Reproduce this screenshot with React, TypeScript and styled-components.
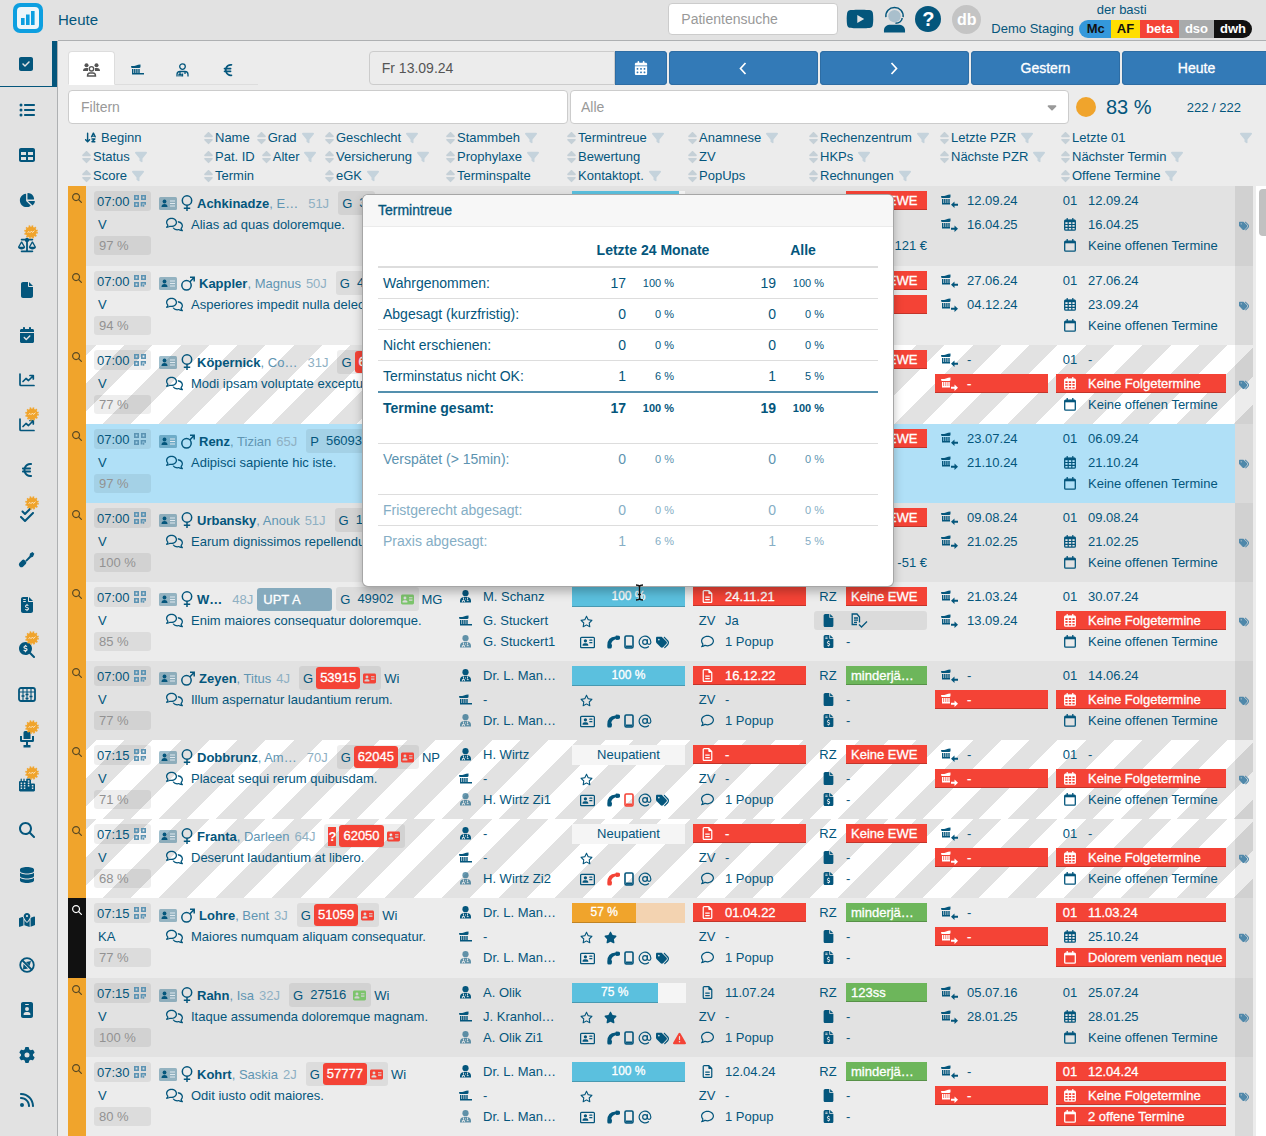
import React from "react";
import styled, { createGlobalStyle, css } from "styled-components";
import {
  FaSquareCheck, FaListUl, FaTable, FaChartPie, FaScaleBalanced, FaFile, FaCalendarCheck,
  FaEuroSign, FaCheckDouble, FaFileInvoiceDollar, FaMagnifyingGlassDollar, FaCity,
  FaMagnifyingGlass, FaDatabase, FaMapLocationDot, FaIdBadge, FaGear, FaRss,
  FaCalendarDays, FaSort, FaFilter, FaArrowDownAZ,
  FaRegStar, FaStar, FaRegAddressCard, FaAddressCard, FaTags, FaTriangleExclamation,
  FaRegFileLines, FaRegComment, FaRegComments, FaYoutube, FaCaretDown,
} from "react-icons/fa6";
import { AtSign } from "lucide-react";

const c = {
  ink: "#04567c",
  muted: "#5f95b2",
  faint: "#8fb0c3",
  page: "#ececec",
  shade: "#e2e2e2",
  line: "#aeb0b2",
  red: "#f44336",
  green: "#6db65b",
  orange: "#f0a42c",
  sky: "#5bc0de",
  primary: "#337ab7",
};

const Global = createGlobalStyle`
  *, *::before, *::after { box-sizing: border-box; }
  body { margin: 0; font: 13px/19px "Liberation Sans", Arial, sans-serif; color: ${c.ink}; background: ${c.page}; }
  button, input, select { font: inherit; color: inherit; margin: 0; }
  button { border: 0; padding: 0; background: none; cursor: pointer; }
  svg { display: block; flex: none; }
`;

/* ---------- frame ---------- */

const Frame = styled.div`
  display: grid;
  grid-template: 41px minmax(0, 1fr) / 58px minmax(0, 1fr);
  height: 100vh;
  overflow: hidden;
`;
const LogoCell = styled.div`
  display: flex;
  justify-content: center;
  align-items: flex-start;
  padding: 3px 2px 0 0;
  background: ${c.shade};
`;
const TopBar = styled.header`
  display: flex;
  align-items: center;
  background: ${c.shade};
  border-bottom: 1px solid ${c.line};
  padding: 0 14px 2px 0;
`;
const PageTitle = styled.h1`
  flex: 1;
  margin: 0;
  font-size: 15px;
  font-weight: 400;
`;
const TextField = styled.input`
  height: 34px;
  padding: 0 12px;
  border: 1px solid #ccc;
  border-radius: 4px;
  background: ${(p) => (p.readOnly ? "#ececec" : "#fff")};
  font-size: 14px;
  color: #555;
  outline: 0;
  &::placeholder { color: #999; opacity: 1; }
`;
const PatientSearch = styled(TextField)`
  width: 170px;
  height: 32px;
`;
const TopIcons = styled.div`
  display: flex;
  align-items: center;
  gap: 9px;
  margin: 0 10px 0 8px;
`;
const HelpButton = styled.button`
  width: 26px;
  height: 26px;
  border-radius: 50%;
  background: ${c.ink};
  color: #fff;
  font-size: 20px;
  font-weight: 700;
`;
const Avatar = styled.span`
  width: 29px;
  height: 29px;
  margin-left: 2px;
  border-radius: 50%;
  background: #c4c4c4;
  color: #fff;
  font-size: 16px;
  font-weight: 700;
  line-height: 29px;
  text-align: center;
`;
const Account = styled.div`
  display: flex;
  flex-direction: column;
  align-items: center;
`;
const AccountRow = styled.div`
  display: flex;
  align-items: center;
  gap: 5px;
`;
const Pills = styled.div`
  display: flex;
  border-radius: 9px;
  overflow: hidden;
`;
const Pill = styled.span<{ $bg: string; $fg: string }>`
  padding: 0 6px;
  line-height: 18px;
  font-weight: 700;
  background: ${(p) => p.$bg};
  color: ${(p) => p.$fg};
  &:first-child { padding-left: 8px; }
`;

/* ---------- sidebar ---------- */

const Sidebar = styled.nav`
  border-right: 1px solid ${c.line};
  background: ${c.shade};
  overflow: hidden;
`;
const NavItem = styled.a<{ $active?: boolean }>`
  display: grid;
  place-items: center;
  height: 45px;
  padding-right: 4px;
  color: ${c.ink};
  font-size: 16px;
  ${(p) => p.$active && css`
    height: 46px;
    padding-right: 0;
    border-right: 5px solid ${c.ink};
    border-bottom: 1px solid ${c.ink};
  `}
`;
const NavIcon = styled.span`
  position: relative;
`;
const Badge = styled.span`
  position: absolute;
  top: -11px;
  left: 6px;
`;

/* ---------- toolbar ---------- */

const Main = styled.main`
  display: flex;
  flex-direction: column;
  min-width: 0;
  min-height: 0;
  padding-left: 10px;
  overflow: hidden;
`;
const Toolbar = styled.div`
  display: flex;
  justify-content: space-between;
  padding-top: 10px;
  margin-right: -5px;
`;
const Tabs = styled.div`
  display: flex;
  width: 190px;
  height: 34px;
  border-bottom: 1px solid #ddd;
`;
const Tab = styled.button<{ $active?: boolean }>`
  display: grid;
  place-items: center;
  width: 45px;
  height: 34px;
  padding-top: 3px;
  font-size: 14px;
  ${(p) => p.$active && css`
    width: 47px;
    border: 1px solid #ddd;
    border-bottom-color: #fff;
    border-radius: 4px 4px 0 0;
    background: #fff;
    color: #555;
  `}
`;
const DateNav = styled.div`
  display: flex;
  gap: 2px;
  width: 75%;
`;
const DateGroup = styled.div`
  display: flex;
  flex: 2 1 0;
  min-width: 0;
`;
const DateField = styled(TextField)`
  flex: 1;
  min-width: 0;
  border-radius: 4px 0 0 4px;
`;
const Primary = styled.button<{ $addon?: boolean }>`
  display: grid;
  place-items: center;
  flex: ${(p) => (p.$addon ? "0 0 52px" : "1 1 0")};
  height: 34px;
  border-radius: ${(p) => (p.$addon ? "0 4px 4px 0" : "4px")};
  background: ${c.primary};
  box-shadow: inset 0 0 0 1px #2e6da4;
  color: #fff;
  font-size: 14px;
  -webkit-text-stroke: 0.3px currentColor;
`;
const FilterBar = styled.div`
  display: grid;
  grid-template-columns: minmax(0, 500fr) minmax(0, 499fr) 182px;
  gap: 2px;
  padding: 5px 13px 4px 0;
`;
const SelectBox = styled.div`
  display: grid;
  > * { grid-area: 1 / 1; }
  > svg { place-self: center end; margin-right: 10px; color: #999; pointer-events: none; }
`;
const Select = styled.select`
  appearance: none;
  height: 34px;
  padding: 0 10px;
  border: 1px solid #ccc;
  border-radius: 4px;
  background: #fff;
  font-size: 14px;
  color: #999;
`;
const Summary = styled.div`
  display: flex;
  align-items: center;
  padding: 0 12px 0 5px;
`;
const Dot = styled.span`
  width: 20px;
  height: 20px;
  margin-right: 10px;
  border-radius: 50%;
  background: ${c.orange};
`;
const Percent = styled.span`
  flex: 1;
  font-size: 20px;
`;

/* ---------- list ---------- */

const ListArea = styled.div`
  position: relative;
  display: flex;
  gap: 3px;
  flex: 1;
  min-height: 0;
`;
const Track = styled.div`
  width: 10px;
  margin-top: 58px;
  padding: 3px 0 0 3px;
  background: #fff;
`;
const Thumb = styled.div`
  height: 47px;
  border-radius: 4px 0 0 4px;
  background: #c1c1c1;
`;
const List = styled.table`
  display: block;
  flex: 1;
  min-width: 0;
  thead, tbody { display: block; }
  th, td { padding: 0; }
`;
const HeadRow = styled.tr`
  display: grid;
  grid-template-columns: 122fr 121fr 121fr 121fr 121fr 121fr 131fr 121fr 192fr;
  height: 58px;
  padding-left: 14px;
`;
const HeadCell = styled.th`
  font-weight: 400;
  text-align: left;
  white-space: nowrap;
`;
const HeadLine = styled.div`
  display: flex;
  align-items: center;
  gap: 5px;
  height: 19px;
  > svg { color: #c5d3dc; font-size: 12px; }
`;
const EndFilter = styled.span`
  margin-left: auto;
  padding-right: 1px;
  color: #c5d3dc;
  font-size: 12px;
`;
const SortButton = styled.button`
  display: flex;
  align-items: center;
  gap: 2px;
  > svg { width: 9px; height: 14px; color: #c5d0d7; }
  & + & { margin-left: 2px; }
`;
const ActiveSort = styled.span`
  display: flex;
  padding: 0 2px;
  font-size: 13px;
`;

type Tone = "shade" | "plain" | "stripe" | "select";
const toneBg: Record<Tone, string> = {
  shade: c.shade,
  plain: c.page,
  stripe: "repeating-linear-gradient(135deg, #e2e2e2 0 20px, #fff 20px 40px)",
  select: "#b0e0f7",
};
const Row = styled.tr<{ $tone: Tone; $tall?: boolean }>`
  display: grid;
  grid-template-columns: 18px 361fr 121fr 121fr 121fr 121fr 121fr 183fr 18px;
  height: ${(p) => (p.$tall ? 80 : 79)}px;
  background: ${(p) => toneBg[p.$tone]};
  white-space: nowrap;
`;
const Strip = styled.td<{ $dark?: boolean }>`
  background: ${(p) => (p.$dark ? "#111" : c.orange)};
  color: ${(p) => (p.$dark ? "#fff" : "#5a4a24")};
  > button { display: grid; place-items: center; width: 18px; height: 24px; font-size: 10px; }
`;
const lines = css`
  display: grid;
  grid-template-rows: 24px 21px 21px;
  align-items: start;
  align-content: start;
`;
const PatientCell = styled.td`
  display: grid;
  grid-template-columns: 57px minmax(0, 1fr);
  column-gap: 8px;
  padding: 5px 0 0 8px !important;
`;
const Stack = styled.div`${lines}`;
const Cell = styled.td<{ $end?: number }>`
  ${lines}
  padding: 5px ${(p) => p.$end ?? 4}px 0 4px !important;
  min-width: 0;
`;
const TimeBox = styled.div`
  display: flex;
  align-items: center;
  justify-content: space-between;
  height: 20px;
  padding: 0 5px 0 3px;
  border-radius: 3px;
  background: rgba(0, 0, 0, 0.065);
`;
const StatusText = styled.div`
  padding-left: 4px;
`;
const Score = styled(TimeBox)`
  height: 19px;
  padding-left: 5px;
  color: #929292;
`;
const NameLine = styled.div`
  display: flex;
  align-items: center;
  height: 24px;
`;
const CardChip = styled.span`
  display: grid;
  margin-right: 4px;
`;
const Given = styled.span`
  color: ${c.muted};
`;
const Name = styled.span<{ $cut?: boolean }>`
  margin: 0 ${(p) => (p.$cut ? 10 : 5)}px 0 4px;
`;
const Age = styled.span`
  margin-right: 9px;
  color: ${c.faint};
`;
const Treatment = styled.span`
  width: 75px;
  margin: 0 4px 0 -5px;
  padding-left: 6px;
  border-radius: 3px;
  background: #85aabd;
  color: #fff;
  line-height: 23px;
  -webkit-text-stroke: 0.3px #fff;
`;
const IdBox = styled.span`
  display: flex;
  align-items: center;
  gap: 3px;
  height: 24px;
  padding: 0 5px 0 4px;
  margin-right: 3px;
  border-radius: 3px;
  background: rgba(0, 0, 0, 0.065);
`;
const PatientId = styled.span<{ $red?: boolean }>`
  padding: 0 4px;
  border-radius: 3px;
  line-height: 22px;
  ${(p) => p.$red && css`
    background: ${c.red};
    color: #fff;
    -webkit-text-stroke: 0.3px #fff;
  `}
`;
const Unknown = styled.span`
  background: ${c.red};
  color: #fff;
  font-weight: 700;
`;
const EgkIcon = styled.span<{ $ok?: boolean }>`
  color: ${(p) => (p.$ok ? "#7cc46c" : c.red)};
  font-size: 13px;
`;
const Comment = styled.div`
  display: flex;
  align-items: center;
  gap: 8px;
  padding-left: 7px;
  > svg { font-size: 17px; }
`;

type Fill = "red" | "green" | "gray";
const fills: Record<Fill, string> = { red: c.red, green: c.green, gray: "rgba(0,0,0,.07)" };
const fillStyle = css<{ $fill?: Fill }>`
  ${(p) => p.$fill && css`
    background: ${fills[p.$fill]};
    ${p.$fill !== "gray" && css`
      color: #fff;
      -webkit-text-stroke: 0.3px #fff;
      box-shadow: inset 0 -1px 0 rgba(0, 0, 0, 0.2);
    `}
  `}
`;
const Line = styled.div<{ $fill?: Fill }>`
  display: grid;
  grid-template-columns: 28px minmax(0, 1fr);
  column-gap: 4px;
  height: 19px;
  border-radius: ${(p) => (p.$fill === "gray" ? 3 : 0)}px;
  ${fillStyle}
`;
const Slot = styled.span<{ $light?: boolean }>`
  display: grid;
  place-items: center;
  opacity: ${(p) => (p.$light ? 0.6 : 1)};
  font-size: 13px;
`;
const SlotText = styled.span`
  text-align: center;
`;
const Value = styled.span<{ $fill?: Fill; $right?: boolean; $inset?: boolean }>`
  display: block;
  padding-left: ${(p) => (p.$fill || p.$inset ? 5 : 0)}px;
  padding-top: ${(p) => (p.$inset ? 2 : 0)}px;
  text-align: ${(p) => (p.$right ? "right" : "left")};
  ${fillStyle}
`;
const Bar = styled.div<{ $rest: string }>`
  height: 20px;
  background: ${(p) => p.$rest};
  text-align: center;
`;
const BarFill = styled.div<{ $color: string }>`
  height: 20px;
  background: ${(p) => p.$color};
  box-shadow: inset 0 -1px 0 rgba(0, 0, 0, 0.2);
  color: #fff;
  font-size: 12px;
  -webkit-text-stroke: 0.3px #fff;
`;
const Icons = styled.div<{ $gap: number }>`
  display: flex;
  align-items: center;
  gap: ${(p) => p.$gap}px;
  height: 20px;
  padding-left: 8px;
  font-size: 13px;
`;
const Contact = styled.span<{ $bad?: boolean; $lead?: boolean }>`
  margin-right: ${(p) => (p.$lead ? 8 : 0)}px;
  font-size: ${(p) => (p.$lead ? 15 : 13)}px;
  color: ${(p) => (p.$bad ? c.red : "inherit")};
`;
const TagCell = styled.td<{ $solid?: boolean }>`
  display: grid;
  place-items: center;
  background: ${(p) => (p.$solid ? "#dadada" : "rgba(0,0,0,.075)")};
  color: #4f88aa;
  font-size: 10px;
`;

/* ---------- popover ---------- */

const Popover = styled.section`
  position: absolute;
  top: 66px;
  left: 294px;
  width: 532px;
  height: 393px;
  border: 1px solid rgba(0, 0, 0, 0.35);
  border-radius: 6px;
  background: #fff;
  box-shadow: 0 5px 10px rgba(0, 0, 0, 0.25);
  overflow: hidden;
  font-size: 14px;
`;
const PopTitle = styled.h2`
  margin: 0 0 8px;
  padding: 0 15px;
  border-bottom: 1px solid #ebebeb;
  background: #f7f7f7;
  font-size: 14px;
  font-weight: 400;
  line-height: 31px;
  -webkit-text-stroke: 0.3px currentColor;
`;
const Stats = styled.table`
  width: 500px;
  margin: 0 15px;
  border-collapse: collapse;
  table-layout: fixed;
  th { height: 32px; padding: 0; }
  thead tr { border-bottom: 2px solid #ddd; }
`;
const StatRow = styled.tr<{ $strong?: boolean; $level: number; $deep?: boolean }>`
  height: ${(p) => (p.$deep ? 51 : 31)}px;
  border-top: ${(p) => (p.$strong ? `2px solid #5490ae` : "1px solid #ddd")};
  color: ${(p) => [c.ink, "#5c93b0", "#85aec5"][p.$level]};
  font-weight: ${(p) => (p.$strong ? 700 : 400)};
  td, th {
    height: auto;
    padding: 6px 5px 5px;
    vertical-align: top;
    font-weight: inherit;
    text-align: right;
  }
  th { text-align: left; }
  td:nth-of-type(even) { padding-right: 54px; font-size: 11px; }
`;
const Cursor = styled.span`
  position: absolute;
  top: 456px;
  left: 567px;
`;

/* ---------- drawn icons ---------- */

const Logo = () => (
  <svg width="30" height="30" viewBox="0 0 30 30">
    <rect width="30" height="30" rx="7" fill="#0d9fe0" />
    <rect x="4" y="4" width="22" height="22" rx="4" fill="#eef6fa" />
    <rect x="8" y="15" width="3.6" height="7" fill="#0d9fe0" />
    <rect x="13" y="11.5" width="3.6" height="10.5" fill="#0d9fe0" />
    <rect x="18" y="8" width="3.6" height="14" fill="#0d9fe0" />
  </svg>
);
const Agent = () => (
  <svg width="23" height="27" viewBox="0 0 24 27">
    <path d="M1 27v-2c0-4 3-6 7-6h8c4 0 7 2 7 6v2z" fill={c.ink} />
    <circle cx="12" cy="10" r="6.500" fill="#a9bfcc" />
    <path d="M3 11C2.500 5 6.500 1 12 1s9.500 4 9 10M20 12c0 3-3 5.500-7 5.500" fill="none" stroke={c.ink} strokeWidth="1.500" />
  </svg>
);
const BadgeIcon = () => (
  <svg width="14" height="14" viewBox="0 0 14 14">
    <circle cx="7" cy="7" r="5.600" fill={c.orange} />
    <circle cx="7" cy="7" r="6" fill="none" stroke={c.orange} strokeWidth="1.600" strokeDasharray="1.570 1.570" />
    <path d="M3.500 7.500l1.500-1 1 1.200L7.500 6l1 1.500 2-1.800" fill="none" stroke="#fbe3bd" strokeWidth="1" />
  </svg>
);
const ChartIcon = () => (
  <svg width="16" height="14" viewBox="0 0 16 14" fill="none" stroke="currentColor" strokeWidth="1.700" strokeLinecap="round" strokeLinejoin="round">
    <path d="M1 1v10.500q0 1 1 1h13M4 8.500l3-3 2.500 2L14 3M11 2.500h3.300V6" />
  </svg>
);
const ToolIcon = () => (
  <svg width="17" height="17" viewBox="0 0 17 17" fill="currentColor">
    <path d="M1.300 12l3-3q1.200-1 2.700.500l.500.500q1.500 1.500.500 2.700l-3 3q-1.800 1.300-3.300-.3-1.600-1.600-.4-3.400z" />
    <path d="M14.500 1l1.800 1.800-1.300 3-2 .7-4.500 4.200-1.200-1.200L11.500 5l.5-2.500z" />
  </svg>
);
const AbacusIcon = () => (
  <svg width="18" height="15" viewBox="0 0 18 15" fill="none" stroke="currentColor">
    <rect x="1" y="1" width="16" height="13" rx="2" strokeWidth="1.800" />
    <path d="M5 1v13M9 1v13M13 1v13M1 5h16" strokeWidth="1.100" />
    <path d="M3.500 9h3M7.500 7.500h3M11.500 9.500h3M7.500 11.500h3" strokeWidth="1.500" />
  </svg>
);
const ChairIcon = () => (
  <svg width="16" height="17" viewBox="0 0 16 17" fill="currentColor">
    <path d="M4.500 1.500Q4.500 0 6 0h4q1.500 0 1.500 1.500V8h-7zM1 5h2v4h10V5h2v4.500Q15 11 13.500 11H9v3h2.500v2.500h-7V14H7v-3H2.500Q1 11 1 9.500z" />
  </svg>
);
const CompassOff = () => (
  <svg width="16" height="16" viewBox="0 0 16 16" fill="none" stroke="currentColor" strokeWidth="1.800">
    <circle cx="8" cy="8" r="6.800" />
    <path d="M3 3l10 10" />
    <path d="M7 5l5-1-1.500 5zM4.500 7l4.500 4.500-5 1z" fill="currentColor" stroke="none" />
  </svg>
);
const GroupIcon = () => (
  <svg width="17" height="14" viewBox="0 0 17 14" fill="currentColor">
    <circle cx="3.500" cy="2.200" r="2" /><circle cx="13.500" cy="2.200" r="2" />
    <path d="M0 8q0-3 3-3h2v3zM17 8q0-3-3-3h-2v3z" />
    <circle cx="8.500" cy="5.800" r="2.200" fill="none" stroke="currentColor" strokeWidth="1.400" />
    <path d="M4.500 13q0-3 2.500-3h3q2.500 0 2.500 3z" fill="none" stroke="currentColor" strokeWidth="1.400" />
  </svg>
);
const DoctorOutline = () => (
  <svg width="13" height="14" viewBox="0 0 13 14" fill="none" stroke="currentColor" strokeWidth="1.300">
    <circle cx="6.500" cy="3.600" r="2.800" />
    <path d="M1 13.500v-2q0-3 3-3h5q3 0 3 3v2M4 9v2.500M9 9v2M3 13.500v-2h2v2M6.500 10.500v3" />
  </svg>
);
const DoctorSolid = () => (
  <svg width="11" height="13" viewBox="0 0 11 13">
    <circle cx="5.500" cy="3.200" r="3.100" fill="currentColor" />
    <path d="M0 12.500V11q0-3.500 3.500-4h4Q11 7.500 11 11v1.500z" fill="currentColor" />
    <path d="M3.500 7.500v2.200M2.400 12.200v-1.700h2v1.700M7.500 7.500v2M6.800 10.600h1.800M5.500 8.500v1" stroke={c.page} strokeWidth=".900" fill="none" />
  </svg>
);
const Brush = ({ arrow }: { arrow?: "in" | "out" }) => (
  <svg width={arrow ? 17 : 13} height={arrow ? 14 : 11} viewBox={arrow ? "0 0 17 14" : "0 0 13 11"} fill="currentColor">
    <path d="M0 2Q3 2.200 5 1.400t4.500-1v2.800L8.500 4H0.500zM1 5H2.400V9H1zM3.100 5h1.400V9H3.100zM5.200 5H6.600V9H5.200zM7.300 5h1.400V9H7.300zM1 9h8v1.500H1z" />
    {!arrow && <path d="M9 9h4v1.500H9z" />}
    {arrow === "in" && <path d="M10 10.800L13.500 7.500v2.300h3.500v2h-3.500V14z" />}
    {arrow === "out" && <path d="M17 10.800L13.500 7.500v2.300H10v2h3.500V14z" />}
  </svg>
);
const Venus = () => (
  <svg width="12" height="16" viewBox="0 0 12 16" fill="none" stroke="currentColor" strokeWidth="1.500">
    <circle cx="6" cy="5.500" r="4.700" /><path d="M6 10.200V16M2.800 13.200h6.400" />
  </svg>
);
const Mars = () => (
  <svg width="14" height="15" viewBox="0 0 14 15" fill="none" stroke="currentColor" strokeWidth="1.500">
    <circle cx="5.500" cy="9.300" r="4.700" /><path d="M8.800 6L13 1.500M9 1.300h4.200V5.500" />
  </svg>
);
const Qr = () => (
  <svg width="12" height="12" viewBox="0 0 12 12" fill="none" stroke="#5b93b3" strokeWidth="1.600">
    <path d="M.8.800h3.400v3.400H.8zM7.800.800h3.400v3.400H7.800zM.8 7.800h3.400v3.400H.8zM7.500 11.500V7.800h3.800v2M9.500 9.500v2.300" />
  </svg>
);
const ProfileCard = () => (
  <svg width="18" height="13" viewBox="0 0 18 13">
    <rect width="18" height="13" rx="1.500" fill={c.ink} opacity=".38" />
    <circle cx="5.500" cy="4.500" r="1.900" fill={c.ink} /><path d="M2.500 10q0-3 3-3t3 3z" fill={c.ink} />
    <path d="M11 4h5M11 6.500h5M11 9h5" stroke="#dfe8ee" strokeWidth="1" />
  </svg>
);
const Handset = () => (
  <svg width="13" height="14" viewBox="0 0 13 14" fill="currentColor">
    <path d="M8.500 1.500Q8.500.5 9.500.5L12 .8q1 .2 1 1.200v1.500q0 1-1 1.200l-2.200.3q-1 0-1.100-.8-3.700 1-4.500 4.800.8.200.8 1.200l-.2 2q-.3 1.200-1.300 1.200H1.500Q.5 13.400.4 12.400-.6 2 8.500 1.500z" />
  </svg>
);
const Mobile = () => (
  <svg width="10" height="14" viewBox="0 0 10 14" fill="none" stroke="currentColor">
    <rect x="1" y="1" width="8" height="12" rx="1.200" strokeWidth="1.600" /><path d="M2 11.500h6" strokeWidth="2" />
  </svg>
);
const CalendarGrid = () => (
  <svg width="12" height="13" viewBox="0 0 12 13" fill="none" stroke="currentColor">
    <rect x=".7" y="2.200" width="10.600" height="10" rx="1" strokeWidth="1.300" />
    <path d="M.7 3h10.600" strokeWidth="2.400" />
    <path d="M3.200 0v3M8.800 0v3M.7 6.500h10.600M.7 9.300h10.600M4.200 4v8M7.800 4v8" strokeWidth="1.200" />
  </svg>
);
const CalendarEmpty = () => (
  <svg width="12" height="13" viewBox="0 0 12 13" fill="none" stroke="currentColor">
    <rect x=".7" y="2.200" width="10.600" height="10" rx="1" strokeWidth="1.300" />
    <path d="M.7 3.200h10.600" strokeWidth="2.200" /><path d="M3.200 0v3M8.800 0v3" strokeWidth="1.300" />
  </svg>
);
const FileChecked = () => (
  <svg width="17" height="15" viewBox="0 0 17 15" fill="none" stroke="currentColor" strokeWidth="1.300">
    <path d="M8.500 9.500V4L6 1H1.200v10.500H6M3 5h4M3 7.200h4M3 9.300h3M8 11.500l2.500 2.500L16 8.500" />
  </svg>
);
const Chevron = ({ flip }: { flip?: boolean }) => (
  <svg width="8" height="13" viewBox="0 0 8 13" fill="none" stroke="currentColor" strokeWidth="1.700">
    <path d={flip ? "M1.500 1l5 5.500-5 5.500" : "M6.500 1l-5 5.500 5 5.500"} />
  </svg>
);
const IBeam = () => (
  <svg width="9" height="17" viewBox="0 0 9 17" fill="none" stroke="#111" strokeWidth="1.300">
    <path d="M1 1q3 0 3.500 1.500Q5 1 8 1M4.500 2v13M1 16q3 0 3.500-1.500Q5 16 8 16M3 10.500h3" />
  </svg>
);

/* ---------- data ---------- */

const nav: { label: string; icon: React.ReactNode; badge?: boolean }[] = [
  { label: "Heute", icon: <FaSquareCheck /> },
  { label: "Liste", icon: <FaListUl /> },
  { label: "Tabelle", icon: <FaTable /> },
  { label: "Auswertung", icon: <FaChartPie /> },
  { label: "Vergleich", icon: <FaScaleBalanced size={18} />, badge: true },
  { label: "Dokumente", icon: <FaFile /> },
  { label: "Termine", icon: <FaCalendarCheck /> },
  { label: "Statistik", icon: <ChartIcon /> },
  { label: "Trends", icon: <ChartIcon />, badge: true },
  { label: "Umsatz", icon: <FaEuroSign /> },
  { label: "Aufgaben", icon: <FaCheckDouble />, badge: true },
  { label: "Werkzeuge", icon: <ToolIcon /> },
  { label: "Rechnungen", icon: <FaFileInvoiceDollar /> },
  { label: "Kostensuche", icon: <FaMagnifyingGlassDollar />, badge: true },
  { label: "Abrechnung", icon: <AbacusIcon /> },
  { label: "Behandlungsstuhl", icon: <ChairIcon />, badge: true },
  { label: "Standorte", icon: <FaCity />, badge: true },
  { label: "Suche", icon: <FaMagnifyingGlass /> },
  { label: "Daten", icon: <FaDatabase /> },
  { label: "Karte", icon: <FaMapLocationDot /> },
  { label: "Sperren", icon: <CompassOff /> },
  { label: "Personal", icon: <FaIdBadge /> },
  { label: "Einstellungen", icon: <FaGear /> },
  { label: "Neuigkeiten", icon: <FaRss /> },
];

/* "*" after a title adds its filter, "!" marks the active sort, "|" is the filter at the row's end. */
const heads: string[][][] = [
  [["!Beginn"], ["Status*"], ["Score*"]],
  [["Name", "Grad*"], ["Pat. ID", "Alter*"], ["Termin"]],
  [["Geschlecht*"], ["Versicherung*"], ["eGK*"]],
  [["Stammbeh*"], ["Prophylaxe*"], ["Terminspalte"]],
  [["Termintreue*"], ["Bewertung"], ["Kontaktopt.*"]],
  [["Anamnese*"], ["ZV"], ["PopUps"]],
  [["Rechenzentrum*"], ["HKPs*"], ["Rechnungen*"]],
  [["Letzte PZR*"], ["Nächste PZR*"]],
  [["Letzte 01", "|"], ["Nächster Termin*"], ["Offene Termine*"]],
];

interface Patient {
  tone: Tone; tall?: boolean; dark?: boolean;
  time: string; status?: string; score: string;
  sex: "f" | "m"; last: string; given: string; age: string; treatment?: string;
  ins: string; id: string; idRed?: boolean; egk?: "ok" | "bad"; grade?: string; note: string;
  staff?: [string, string, string];
  bar?: number; star?: boolean; contact?: string;
  anam?: string; anamRed?: boolean; zv?: string;
  rz: string; rzFill?: Fill; hkp?: "red" | "checked"; bill?: string;
  pzr: [string, string]; l01: string; l01Red?: boolean; next: string; open?: string;
}
const KF = "Keine Folgetermine";
const patients: Patient[] = [
  { tone: "shade", tall: true, time: "07:00", score: "97 %", sex: "f", last: "Achkinadze", given: "E…", age: "51J", ins: "G", id: "3", note: "Alias ad quas doloremque.", bar: 95, rz: "Keine EWE", rzFill: "red", bill: "121 €", pzr: ["12.09.24", "16.04.25"], l01: "12.09.24", next: "16.04.25" },
  { tone: "plain", time: "07:00", score: "94 %", sex: "m", last: "Kappler", given: "Magnus", age: "50J", ins: "G", id: "4", note: "Asperiores impedit nulla delec", rz: "Keine EWE", rzFill: "red", hkp: "red", pzr: ["27.06.24", "04.12.24"], l01: "27.06.24", next: "23.09.24" },
  { tone: "stripe", time: "07:00", score: "77 %", sex: "f", last: "Köpernick", given: "Co…", age: "31J", ins: "G", id: "6", idRed: true, note: "Modi ipsam voluptate exceptu", rz: "Keine EWE", rzFill: "red", pzr: ["-", "-"], l01: "-", next: KF },
  { tone: "select", time: "07:00", score: "97 %", sex: "m", last: "Renz", given: "Tizian", age: "65J", ins: "P", id: "56093", note: "Adipisci sapiente hic iste.", rz: "Keine EWE", rzFill: "red", pzr: ["23.07.24", "21.10.24"], l01: "06.09.24", next: "21.10.24" },
  { tone: "shade", time: "07:00", score: "100 %", sex: "f", last: "Urbansky", given: "Anouk", age: "51J", ins: "G", id: "1", note: "Earum dignissimos repellendu", rz: "Keine EWE", rzFill: "red", bill: "-51 €", pzr: ["09.08.24", "21.02.25"], l01: "09.08.24", next: "21.02.25" },
  { tone: "plain", time: "07:00", score: "85 %", sex: "f", last: "W…", given: "", age: "48J", treatment: "UPT A", ins: "G", id: "49902", egk: "ok", grade: "MG", note: "Enim maiores consequatur doloremque.", staff: ["M. Schanz", "G. Stuckert", "G. Stuckert1"], bar: 100, contact: "pmat", anam: "24.11.21", anamRed: true, zv: "Ja", rz: "Keine EWE", rzFill: "red", hkp: "checked", pzr: ["21.03.24", "13.09.24"], l01: "30.07.24", next: KF },
  { tone: "shade", time: "07:00", score: "77 %", sex: "m", last: "Zeyen", given: "Titus", age: "4J", ins: "G", id: "53915", idRed: true, egk: "bad", grade: "Wi", note: "Illum aspernatur laudantium rerum.", staff: ["Dr. L. Man…", "-", "Dr. L. Man…"], bar: 100, contact: "pma", anam: "16.12.22", anamRed: true, rz: "minderjä…", rzFill: "green", pzr: ["-", "-"], l01: "14.06.24", next: KF },
  { tone: "stripe", time: "07:15", score: "71 %", sex: "f", last: "Dobbrunz", given: "Am…", age: "70J", ins: "G", id: "62045", idRed: true, egk: "bad", grade: "NP", note: "Placeat sequi rerum quibusdam.", staff: ["H. Wirtz", "-", "H. Wirtz Zi1"], contact: "pMat", anam: "-", anamRed: true, rz: "Keine EWE", rzFill: "red", pzr: ["-", "-"], l01: "-", next: KF },
  { tone: "stripe", time: "07:15", score: "68 %", sex: "f", last: "Franta", given: "Darleen", age: "64J", ins: "?", id: "62050", idRed: true, egk: "bad", note: "Deserunt laudantium at libero.", staff: ["-", "-", "H. Wirtz Zi2"], contact: "Pma", anam: "-", anamRed: true, rz: "Keine EWE", rzFill: "red", pzr: ["-", "-"], l01: "-", next: KF },
  { tone: "plain", tall: true, dark: true, time: "07:15", status: "KA", score: "77 %", sex: "m", last: "Lohre", given: "Bent", age: "3J", ins: "G", id: "51059", idRed: true, egk: "bad", grade: "Wi", note: "Maiores numquam aliquam consequatur.", staff: ["Dr. L. Man…", "-", "Dr. L. Man…"], bar: 57, star: true, contact: "pmat", anam: "01.04.22", anamRed: true, rz: "minderjä…", rzFill: "green", pzr: ["-", "-"], l01: "11.03.24", l01Red: true, next: "25.10.24", open: "Dolorem veniam neque" },
  { tone: "shade", time: "07:15", score: "100 %", sex: "f", last: "Rahn", given: "Isa", age: "32J", ins: "G", id: "27516", egk: "ok", grade: "Wi", note: "Itaque assumenda doloremque magnam.", staff: ["A. Olik", "J. Kranhol…", "A. Olik Zi1"], bar: 75, star: true, contact: "pmatw", anam: "11.07.24", rz: "123ss", rzFill: "green", pzr: ["05.07.16", "28.01.25"], l01: "25.07.24", next: "28.01.25" },
  { tone: "plain", time: "07:30", score: "80 %", sex: "f", last: "Kohrt", given: "Saskia", age: "2J", ins: "G", id: "57777", idRed: true, egk: "bad", grade: "Wi", note: "Odit iusto odit maiores.", staff: ["Dr. L. Man…", "-", "Dr. L. Man…"], bar: 100, contact: "pma", anam: "12.04.24", rz: "minderjä…", rzFill: "green", pzr: ["-", "-"], l01: "12.04.24", l01Red: true, next: KF, open: "2 offene Termine" },
];

const contactIcons: Record<string, React.ReactNode> = {
  p: <Handset />, P: <Handset />, m: <Mobile />, M: <Mobile />,
  a: <AtSign size={14} strokeWidth={2} />, t: <FaTags />, w: <FaTriangleExclamation />,
};

const stats = [
  { label: "Wahrgenommen:", v: ["17", "100 %", "19", "100 %"], level: 0 },
  { label: "Abgesagt (kurzfristig):", v: ["0", "0 %", "0", "0 %"], level: 0 },
  { label: "Nicht erschienen:", v: ["0", "0 %", "0", "0 %"], level: 0 },
  { label: "Terminstatus nicht OK:", v: ["1", "6 %", "1", "5 %"], level: 0 },
  { label: "Termine gesamt:", v: ["17", "100 %", "19", "100 %"], level: 0, strong: true, deep: true },
  { label: "Verspätet (> 15min):", v: ["0", "0 %", "0", "0 %"], level: 1, deep: true },
  { label: "Fristgerecht abgesagt:", v: ["0", "0 %", "0", "0 %"], level: 2 },
  { label: "Praxis abgesagt:", v: ["1", "6 %", "1", "5 %"], level: 2 },
];

/* ---------- parts ---------- */

const HeadTitle = ({ text }: { text: string }) => {
  if (text === "|") return <EndFilter><FaFilter /></EndFilter>;
  return (
    <>
      <SortButton type="button">
        {text.startsWith("!") ? <ActiveSort><FaArrowDownAZ /></ActiveSort> : <FaSort />}
        {text.replace(/[!*]/g, "")}
      </SortButton>
      {text.endsWith("*") && <FaFilter />}
    </>
  );
};

const Loyalty = ({ value }: { value?: number }) => {
  if (value === undefined) return <Bar $rest="#f5f5f5">Neupatient</Bar>;
  const low = value < 60;
  return (
    <Bar $rest={low ? "#f3d3b1" : "#f5f5f5"}>
      <BarFill $color={low ? c.orange : c.sky} style={{ width: `${value}%` }}>{value} %</BarFill>
    </Bar>
  );
};

const PatientRow = ({ p }: { p: Patient }) => {
  const cut = p.given.endsWith("…") || p.last.endsWith("…");
  const missing = (v: string): Fill | undefined => (v === "-" || v === KF ? "red" : undefined);
  return (
    <Row $tone={p.tone} $tall={p.tall}>
      <Strip $dark={p.dark}><button type="button" aria-label="Details"><FaMagnifyingGlass /></button></Strip>
      <PatientCell>
        <Stack>
          <TimeBox>{p.time}<Qr /></TimeBox>
          <StatusText>{p.status ?? "V"}</StatusText>
          <Score>{p.score}</Score>
        </Stack>
        <Stack>
          <NameLine>
            <CardChip><ProfileCard /></CardChip>
            {p.sex === "f" ? <Venus /> : <Mars />}
            <Name $cut={cut}><b>{p.last}</b>{p.given && <Given>, {p.given}</Given>}</Name>
            <Age>{p.age}</Age>
            {p.treatment && <Treatment>{p.treatment}</Treatment>}
            <IdBox>
              {p.ins === "?" ? <Unknown>?</Unknown> : p.ins}
              <PatientId $red={p.idRed}>{p.id}</PatientId>
              {p.egk && <EgkIcon $ok={p.egk === "ok"}><FaAddressCard /></EgkIcon>}
            </IdBox>
            {p.grade}
          </NameLine>
          <Comment><FaRegComments />{p.note}</Comment>
        </Stack>
      </PatientCell>
      <Cell>
        {p.staff && (
          <>
            <Line><Slot><DoctorSolid /></Slot>{p.staff[0]}</Line>
            <Line><Slot><Brush /></Slot>{p.staff[1]}</Line>
            <Line><Slot $light><DoctorSolid /></Slot>{p.staff[2]}</Line>
          </>
        )}
      </Cell>
      <Cell>
        {(p.bar !== undefined || p.contact) && <Loyalty value={p.bar} />}
        {p.contact && (
          <>
            <Icons $gap={11}><FaRegStar />{p.star && <FaStar />}</Icons>
            <Icons $gap={4}>
              <Contact $lead><FaRegAddressCard /></Contact>
              {p.contact.split("").map((k) => (
                <Contact key={k} $bad={"PMw".includes(k)}>{contactIcons[k]}</Contact>
              ))}
            </Icons>
          </>
        )}
      </Cell>
      <Cell>
        {p.anam && (
          <>
            <Line $fill={p.anamRed ? "red" : undefined}><Slot><FaRegFileLines /></Slot>{p.anam}</Line>
            <Line><SlotText>ZV</SlotText>{p.zv ?? "-"}</Line>
            <Line><Slot><FaRegComment /></Slot>1 Popup</Line>
          </>
        )}
      </Cell>
      <Cell>
        <Line><SlotText>{p.anam && "RZ"}</SlotText><Value $fill={p.rzFill}>{p.rz}</Value></Line>
        <Line $fill={p.hkp === "checked" ? "gray" : p.hkp}>
          <Slot><FaFile /></Slot>
          {p.hkp === "checked" ? <Value $inset><FileChecked /></Value> : p.anam && "-"}
        </Line>
        <Line>
          <Slot><FaFileInvoiceDollar /></Slot>
          <Value $right={!!p.bill}>{p.bill ?? (p.anam && "-")}</Value>
        </Line>
      </Cell>
      <Cell>
        <Line><Slot><Brush arrow="in" /></Slot>{p.pzr[0]}</Line>
        <Line $fill={missing(p.pzr[1])}><Slot><Brush arrow="out" /></Slot>{p.pzr[1]}</Line>
      </Cell>
      <Cell $end={9}>
        <Line $fill={p.l01Red ? "red" : undefined}><SlotText>01</SlotText>{p.l01}</Line>
        <Line $fill={missing(p.next)}><Slot><CalendarGrid /></Slot>{p.next}</Line>
        <Line $fill={p.open ? "red" : undefined}><Slot><CalendarEmpty /></Slot>{p.open ?? "Keine offenen Termine"}</Line>
      </Cell>
      <TagCell $solid={p.tone === "select"}><FaTags /></TagCell>
    </Row>
  );
};

export default function App() {
  return (
    <Frame>
      <Global />
      <LogoCell><Logo /></LogoCell>
      <TopBar>
        <PageTitle>Heute</PageTitle>
        <PatientSearch placeholder="Patientensuche" aria-label="Patientensuche" />
        <TopIcons>
          <FaYoutube size={28} />
          <Agent />
          <HelpButton type="button">?</HelpButton>
          <Avatar>db</Avatar>
        </TopIcons>
        <Account>
          <span>der basti</span>
          <AccountRow>
            Demo Staging
            <Pills>
              <Pill $bg="#3498db" $fg="#111">Mc</Pill>
              <Pill $bg="#ffde00" $fg="#111">AF</Pill>
              <Pill $bg={c.red} $fg="#fff">beta</Pill>
              <Pill $bg="#a8aaab" $fg="#fff">dso</Pill>
              <Pill $bg="#111" $fg="#fff">dwh</Pill>
            </Pills>
          </AccountRow>
        </Account>
      </TopBar>

      <Sidebar aria-label="Hauptmenü">
        {nav.map((n, i) => (
          <NavItem key={n.label} href="#" aria-label={n.label} $active={i === 0}>
            <NavIcon>{n.icon}{n.badge && <Badge><BadgeIcon /></Badge>}</NavIcon>
          </NavItem>
        ))}
      </Sidebar>

      <Main>
        <Toolbar>
          <Tabs>
            <Tab type="button" $active aria-label="Patienten"><GroupIcon /></Tab>
            <Tab type="button" aria-label="Prophylaxe"><Brush /></Tab>
            <Tab type="button" aria-label="Behandler"><DoctorOutline /></Tab>
            <Tab type="button" aria-label="Umsatz"><FaEuroSign /></Tab>
          </Tabs>
          <DateNav>
            <DateGroup>
              <DateField readOnly value="Fr 13.09.24" aria-label="Datum" />
              <Primary type="button" $addon aria-label="Kalender"><FaCalendarDays /></Primary>
            </DateGroup>
            <Primary type="button" aria-label="Zurück"><Chevron /></Primary>
            <Primary type="button" aria-label="Weiter"><Chevron flip /></Primary>
            <Primary type="button">Gestern</Primary>
            <Primary type="button">Heute</Primary>
          </DateNav>
        </Toolbar>
        <FilterBar>
          <TextField placeholder="Filtern" aria-label="Filtern" />
          <SelectBox>
            <Select aria-label="Auswahl"><option>Alle</option></Select>
            <FaCaretDown size={14} />
          </SelectBox>
          <Summary><Dot /><Percent>83 %</Percent>222 / 222</Summary>
        </FilterBar>

        <ListArea>
          <List>
            <thead>
              <HeadRow>
                {heads.map((col, i) => (
                  <HeadCell key={i}>
                    {col.map((line, j) => (
                      <HeadLine key={j}>{line.map((t) => <HeadTitle key={t} text={t} />)}</HeadLine>
                    ))}
                  </HeadCell>
                ))}
              </HeadRow>
            </thead>
            <tbody>{patients.map((p) => <PatientRow key={p.last} p={p} />)}</tbody>
          </List>
          <Track><Thumb /></Track>

          <Popover aria-label="Termintreue">
            <PopTitle>Termintreue</PopTitle>
            <Stats>
              <colgroup>
                <col width="200" /><col width="53" /><col width="97" /><col width="53" /><col width="97" />
              </colgroup>
              <thead>
                <tr><th /><th colSpan={2}>Letzte 24 Monate</th><th colSpan={2}>Alle</th></tr>
              </thead>
              <tbody>
                {stats.map((s) => (
                  <StatRow key={s.label} $level={s.level} $strong={s.strong} $deep={s.deep}>
                    <th scope="row">{s.label}</th>
                    {s.v.map((v, i) => <td key={i}>{v}</td>)}
                  </StatRow>
                ))}
              </tbody>
            </Stats>
          </Popover>
          <Cursor><IBeam /></Cursor>
        </ListArea>
      </Main>
    </Frame>
  );
}
